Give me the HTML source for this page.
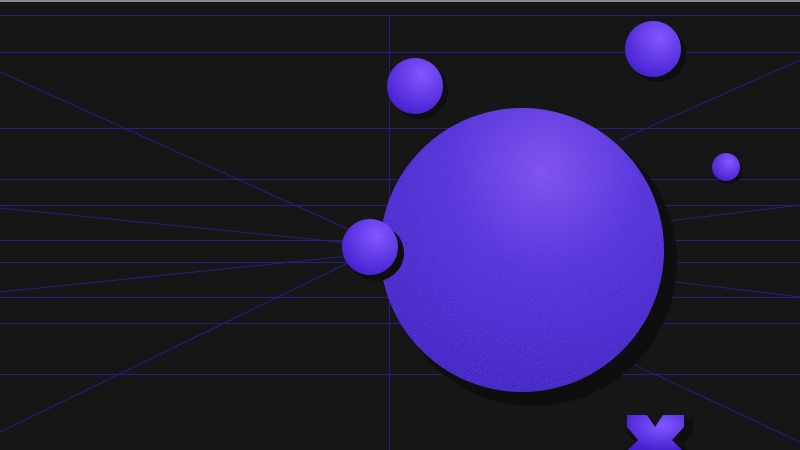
<!DOCTYPE html><html><head><style>body{margin:0}html,body{width:800px;height:450px;overflow:hidden;background:#161616}</style></head><body>
<svg width="800" height="450" viewBox="0 0 800 450" xmlns="http://www.w3.org/2000/svg">
<defs>
<radialGradient id="g" cx="0.58" cy="0.22" r="0.85"><stop offset="0" stop-color="#8756ff"/><stop offset="0.4" stop-color="#5330e6"/><stop offset="1" stop-color="#3a1cc8"/></radialGradient>
<radialGradient id="s" cx="0.62" cy="0.3" r="0.75"><stop offset="0" stop-color="#8258ff"/><stop offset="1" stop-color="#4520cf"/></radialGradient>
<filter id="n"><feTurbulence type="fractalNoise" baseFrequency="0.9" numOctaves="2"/><feColorMatrix type="matrix" values="0 0 0 0 0.15 0 0 0 0 0.08 0 0 0 0 0.5 0 0 0 -1.5 1.0"/><feComposite in2="SourceGraphic" operator="in"/></filter>
</defs>
<rect width="800" height="450" fill="#161616"/>
<rect width="800" height="2" fill="#8a8a8a"/>
<g stroke="#2a1c86" stroke-width="1" fill="none">
<path d="M0 15.5H800M0 52.5H800M0 128.5H800M0 179.5H800M0 205.5H800M0 240.5H800M0 262.5H800M0 297.5H800M0 323.5H800M0 374.5H800M389.5 15V450"/>
<path d="M0 72L350 230M0 208L350 243M0 292L350 256M0 432L350 262M620 140L800 60M660 222L800 205M660 280L800 297M620 358L800 442"/>
</g>
<circle cx="533" cy="262" r="144" fill="#0e0e0e"/>
<circle cx="522" cy="250" r="142" fill="url(#g)"/>
<circle cx="522" cy="250" r="142" fill="#000" filter="url(#n)"/>
<circle cx="420" cy="91" r="28" fill="#0e0e0e"/><circle cx="415" cy="86" r="28" fill="url(#s)"/>
<circle cx="658" cy="54" r="28" fill="#0e0e0e"/><circle cx="653" cy="49" r="28" fill="url(#s)"/>
<circle cx="729" cy="170" r="14" fill="#0e0e0e"/><circle cx="726" cy="167" r="14" fill="url(#s)"/>
<circle cx="376" cy="253" r="28" fill="#0e0e0e"/><circle cx="370" cy="247" r="28" fill="url(#s)"/>
<path d="M631 419h20l11 12l11-12h20v14l-10 11l6 6h-58l6-6l-10-11z" fill="#0e0e0e"/>
<path d="M627 415h20l8 12l8-12h21v12l-12 13l10 10h-54l10-10l-11-13z" fill="url(#s)"/>
</svg>
</body></html>
